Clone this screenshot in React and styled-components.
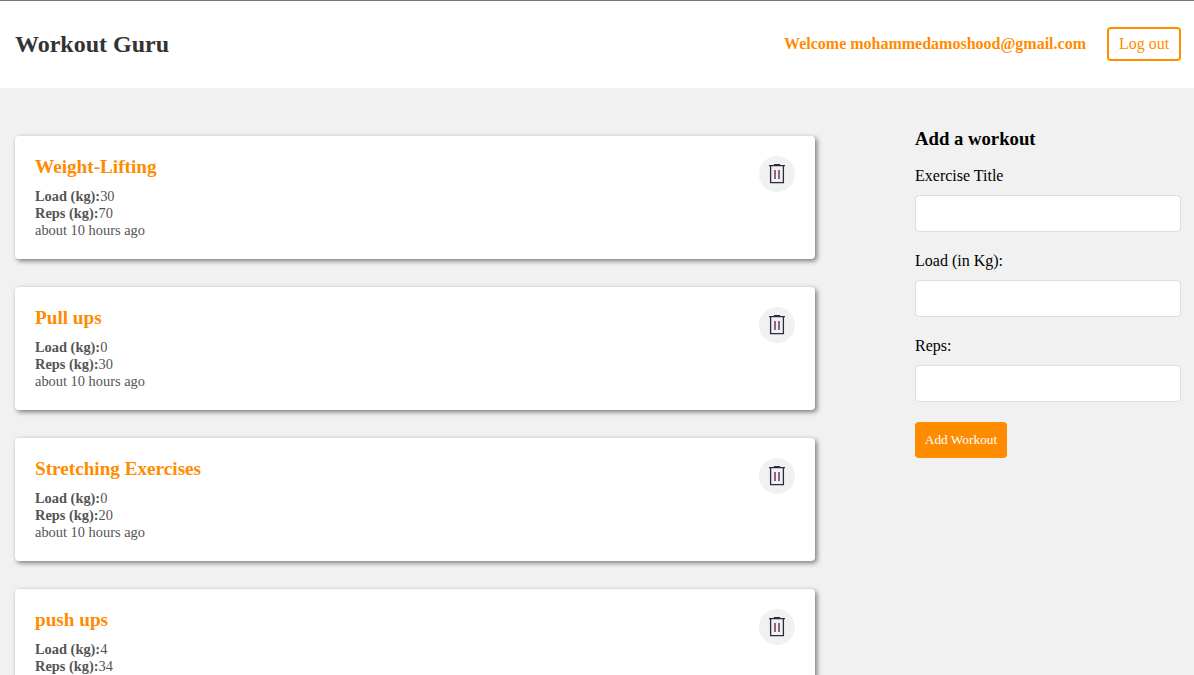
import React from "react";
import styled, { createGlobalStyle } from "styled-components";

const workouts = [
  { title: "Weight-Lifting", load: 30, reps: 70 },
  { title: "Pull ups", load: 0, reps: 30 },
  { title: "Stretching Exercises", load: 0, reps: 20 },
  { title: "push ups", load: 4, reps: 34 },
];

const GlobalStyle = createGlobalStyle`
  html, body {
    margin: 0;
    height: 675px;
    overflow: hidden;
    background: #f1f1f1;
    font-family: "Liberation Serif", "Times New Roman", serif;
  }
`;

const Header = styled.header`
  height: 87px;
  background: #fff;
  border-top: 1px solid #687a85;
  display: flex;
  align-items: center;
  justify-content: space-between;
  padding: 0 13px 0 15px;
`;

const Logo = styled.h1`
  margin: 0;
  font-size: 24px;
  font-weight: 700;
  color: #333;
`;

const Nav = styled.nav`
  display: flex;
  align-items: center;
  gap: 21px;
`;

const Welcome = styled.span`
  font-size: 16px;
  font-weight: 700;
  color: #ff8c00;
  margin-bottom: 1px;
`;

const LogoutButton = styled.button`
  width: 74px;
  height: 34px;
  margin-bottom: 1px;
  padding: 0;
  background: #fff;
  border: 2px solid #ff8c00;
  border-radius: 4px;
  color: #ff8c00;
  font-family: inherit;
  font-size: 16px;
`;

const Page = styled.main`
  display: grid;
  grid-template-columns: 800px 266px;
  column-gap: 100px;
  padding: 36px 13px 0 15px;
`;

const List = styled.section`
  display: flex;
  flex-direction: column;
  gap: 28px;
  margin-top: 12px;
`;

const Card = styled.article`
  position: relative;
  height: 123px;
  box-sizing: border-box;
  padding: 20px;
  background: #fff;
  border-radius: 4px;
  box-shadow: 2px 2px 5px rgba(0, 0, 0, 0.5);
`;

const CardTitle = styled.h4`
  margin: 0 0 10px;
  font-size: 19.2px;
  line-height: 22px;
  font-weight: 700;
  color: #ff8c00;
`;

const CardLine = styled.p`
  margin: 0;
  font-size: 14.4px;
  line-height: 17px;
  color: #555;
`;

const DeleteButton = styled.span`
  position: absolute;
  top: 20px;
  right: 20px;
  width: 36px;
  height: 36px;
  border-radius: 50%;
  background: #f1f1f1;
  display: flex;
  align-items: center;
  justify-content: center;
`;

const Form = styled.form`
  display: flex;
  flex-direction: column;
`;

const FormTitle = styled.h3`
  margin: 0 0 16px;
  padding-top: 4px;
  font-size: 18.72px;
  line-height: 21px;
  font-weight: 700;
  color: #000;
`;

const Label = styled.label`
  font-size: 16px;
  line-height: 18px;
  margin-top: 2px;
  margin-bottom: 10px;
  color: #000;
`;

const Input = styled.input`
  box-sizing: border-box;
  height: 37px;
  padding: 10px;
  margin-bottom: 18px;
  background: #fff;
  border: 1px solid #ddd;
  border-radius: 4px;
`;

const SubmitButton = styled.button`
  align-self: flex-start;
  width: 92px;
  height: 36px;
  margin-top: 2px;
  padding: 0;
  background: #ff8c00;
  border: 0;
  border-radius: 4px;
  color: #fff;
  font-family: inherit;
  font-size: 13.33px;
`;

const TrashIcon = () => (
  <svg width="24" height="24" viewBox="0 0 24 24" fill="none" stroke="#2b2b45" strokeWidth="1.3">
    <path d="M4 3.6h16M9.5 3.4V2.6h5v.8" />
    <path d="M5.6 3.6V20.6h12.8V3.6" />
    <path d="M10 8v9" stroke="#6f3550" strokeWidth="1.5" />
    <path d="M14 8v9" stroke="#6f3550" strokeWidth="1.5" />
  </svg>
);

export default function App() {
  return (
    <>
      <GlobalStyle />
      <Header>
        <Logo>Workout Guru</Logo>
        <Nav>
          <Welcome>Welcome mohammedamoshood@gmail.com</Welcome>
          <LogoutButton>Log out</LogoutButton>
        </Nav>
      </Header>
      <Page>
        <List>
          {workouts.map((workout, index) => (
            <Card key={index}>
              <CardTitle>{workout.title}</CardTitle>
              <CardLine>
                <strong>Load (kg):</strong>
                {workout.load}
              </CardLine>
              <CardLine>
                <strong>Reps (kg):</strong>
                {workout.reps}
              </CardLine>
              <CardLine>about 10 hours ago</CardLine>
              <DeleteButton>
                <TrashIcon />
              </DeleteButton>
            </Card>
          ))}
        </List>
        <Form>
          <FormTitle>Add a workout</FormTitle>
          <Label>Exercise Title</Label>
          <Input type="text" />
          <Label>Load (in Kg):</Label>
          <Input type="text" />
          <Label>Reps:</Label>
          <Input type="text" />
          <SubmitButton type="button">Add Workout</SubmitButton>
        </Form>
      </Page>
    </>
  );
}
